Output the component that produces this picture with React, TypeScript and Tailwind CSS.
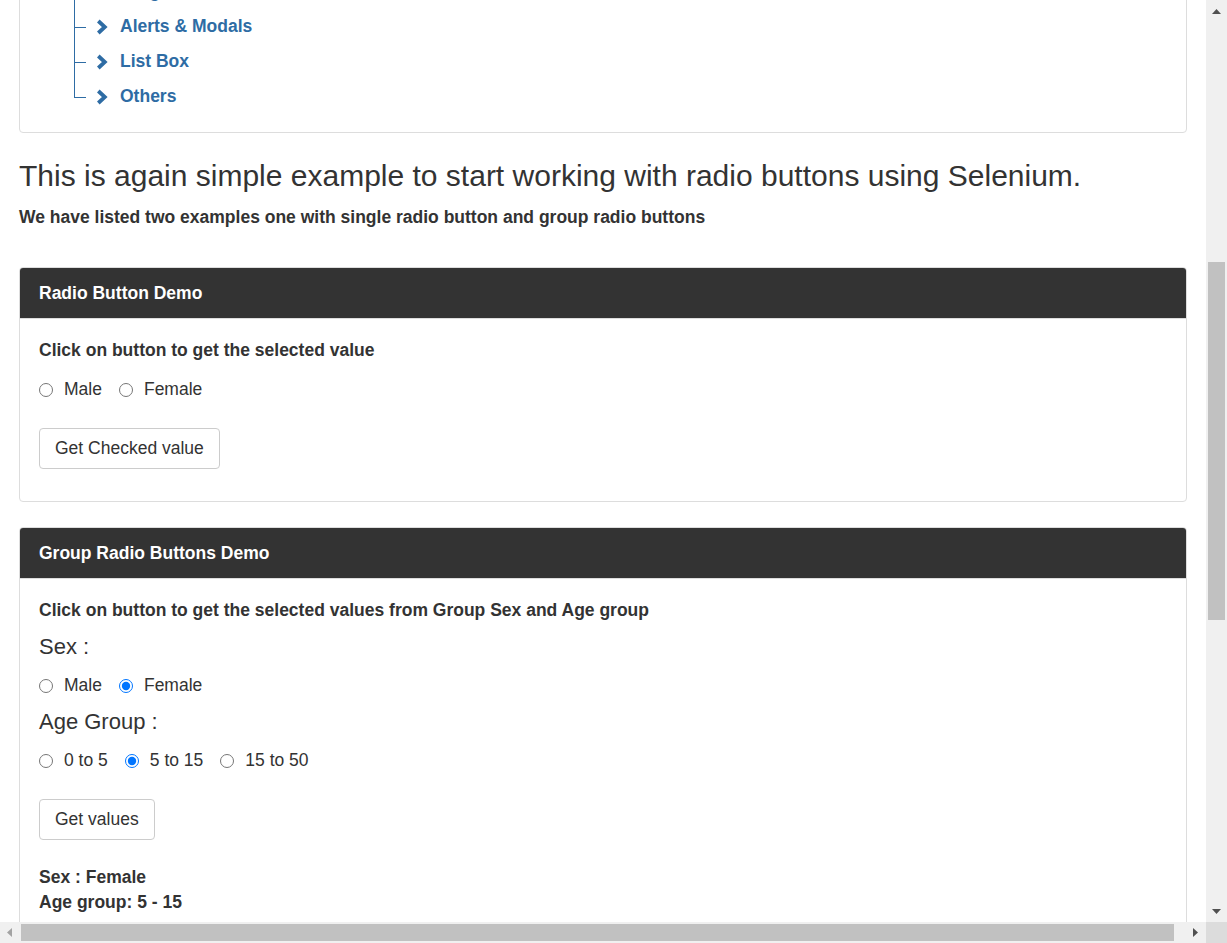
import { useState } from 'react'

const font = "font-['Liberation_Sans',Arial,Helvetica,sans-serif]"

const menu = ['Progress Bars & Sliders', 'Alerts & Modals', 'List Box', 'Others']

function Chevron() {
  return (
    <svg width="12" height="16" viewBox="0 0 12 16" className="shrink-0">
      <polyline points="2.3,2 8.8,8 2.3,14" fill="none" stroke="#2e6ca4" strokeWidth="3.8" strokeLinejoin="miter" />
    </svg>
  )
}

function Radio({ name, label, checked, onPick }: { name: string; label: string; checked: boolean; onPick: () => void }) {
  return (
    <label className="flex items-center gap-[11px] mr-[17px]">
      <input
        type="radio"
        name={name}
        checked={checked}
        onChange={onPick}
        className="m-0 h-[14px] w-[14px] accent-[#0075ff]"
      />
      <span>{label}</span>
    </label>
  )
}

function PanelHeader({ title }: { title: string }) {
  return (
    <div className="h-[51px] border-b border-[#ddd] bg-[#333] px-[19px] pt-[13px] text-[17.5px] font-bold leading-[25px] text-white">
      {title}
    </div>
  )
}

function VScroll() {
  return (
    <div className="flex w-[21px] flex-col bg-[#f0f0f0]">
      <div className="flex h-[22px] items-center justify-center">
        <svg width="9" height="5" viewBox="0 0 9 5">
          <polygon points="0,5 4.5,0 9,5" fill="#505050" />
        </svg>
      </div>
      <div className="flex-1">
        <div className="mx-[2px] mt-[240px] h-[358px] bg-[#c1c1c1]" />
      </div>
      <div className="flex h-[22px] items-center justify-center">
        <svg width="9" height="5" viewBox="0 0 9 5">
          <polygon points="0,0 9,0 4.5,5" fill="#505050" />
        </svg>
      </div>
    </div>
  )
}

function HScroll() {
  return (
    <div className="flex h-[21px] bg-[#f0f0f0]">
      <div className="flex w-[19px] items-center justify-center">
        <svg width="5" height="9" viewBox="0 0 5 9">
          <polygon points="5,0 0,4.5 5,9" fill="#a3a3a3" />
        </svg>
      </div>
      <div className="my-[2px] ml-[2px] w-[1153px] bg-[#c1c1c1]" />
      <div className="flex-1" />
      <div className="flex w-[21px] items-center justify-center">
        <svg width="5" height="9" viewBox="0 0 5 9">
          <polygon points="0,0 5,4.5 0,9" fill="#505050" />
        </svg>
      </div>
      <div className="w-[21px] bg-[#dcdcdc]" />
    </div>
  )
}

export default function App() {
  const [single, setSingle] = useState('')
  const [sex, setSex] = useState('Female')
  const [age, setAge] = useState('5 to 15')

  return (
    <div className={`flex h-[943px] w-[1227px] flex-col overflow-hidden bg-white text-[#333] ${font}`}>
      <div className="flex min-h-0 flex-1">
        <div className="min-w-0 flex-1 overflow-hidden">
          <div className="-mt-[27px] px-[19px]">
            {/* side menu panel, scrolled partly out of view */}
            <div className="rounded-[4px] border border-[#ddd] pb-[18px]">
              {menu.map((item, i) => (
                <div key={item} className="relative flex h-[35px] items-center gap-[12px] pl-[76px]">
                  <span
                    className={`absolute left-[54px] top-0 w-px bg-[#2e6ca4] ${i === menu.length - 1 ? 'h-1/2' : 'h-full'}`}
                  />
                  <span className="absolute left-[54px] top-1/2 h-px w-[12px] bg-[#2e6ca4]" />
                  <Chevron />
                  <span className="text-[17.5px] font-bold leading-[25px] text-[#2e6ca4]">{item}</span>
                </div>
              ))}
            </div>

            <h3 className="mt-[26px] text-[30px] leading-[33px]">
              This is again simple example to start working with radio buttons using Selenium.
            </h3>
            <p className="mt-[13px] text-[17.5px] font-bold leading-[25px]">
              We have listed two examples one with single radio button and group radio buttons
            </p>

            <div className="mt-[37px] overflow-hidden rounded-[4px] border border-[#ddd]">
              <PanelHeader title="Radio Button Demo" />
              <div className="px-[19px] pb-[32px] pt-[19px] text-[17.5px] leading-[25px]">
                <p className="font-bold">Click on button to get the selected value</p>
                <div className="mt-[14px] flex h-[25px] items-center">
                  <Radio name="single" label="Male" checked={single === 'Male'} onPick={() => setSingle('Male')} />
                  <Radio name="single" label="Female" checked={single === 'Female'} onPick={() => setSingle('Female')} />
                </div>
                <button className="mt-[26px] block rounded-[4px] border border-[#ccc] bg-white px-[15px] pb-[7px] pt-[7px] leading-[25px]">
                  Get Checked value
                </button>
              </div>
            </div>

            <div className="mt-[25px] overflow-hidden rounded-[4px] border border-[#ddd]">
              <PanelHeader title="Group Radio Buttons Demo" />
              <div className="px-[19px] pb-[32px] pt-[19px] text-[17.5px] leading-[25px]">
                <p className="font-bold">Click on button to get the selected values from Group Sex and Age group</p>
                <h4 className="mt-[12px] text-[22px] leading-[24px]">Sex :</h4>
                <div className="mt-[14px] flex h-[25px] items-center">
                  <Radio name="sex" label="Male" checked={sex === 'Male'} onPick={() => setSex('Male')} />
                  <Radio name="sex" label="Female" checked={sex === 'Female'} onPick={() => setSex('Female')} />
                </div>
                <h4 className="mt-[12px] text-[22px] leading-[24px]">Age Group :</h4>
                <div className="mt-[14px] flex h-[25px] items-center">
                  {['0 to 5', '5 to 15', '15 to 50'].map((a) => (
                    <Radio key={a} name="age" label={a} checked={age === a} onPick={() => setAge(a)} />
                  ))}
                </div>
                <button className="mt-[26px] block rounded-[4px] border border-[#ccc] bg-white px-[15px] pb-[7px] pt-[7px] leading-[25px]">
                  Get values
                </button>
                <p className="mt-[25px] font-bold">Sex : {sex}</p>
                <p className="font-bold">Age group: {age.replace(' to ', ' - ')}</p>
              </div>
            </div>
          </div>
        </div>
        <VScroll />
      </div>
      <HScroll />
    </div>
  )
}
